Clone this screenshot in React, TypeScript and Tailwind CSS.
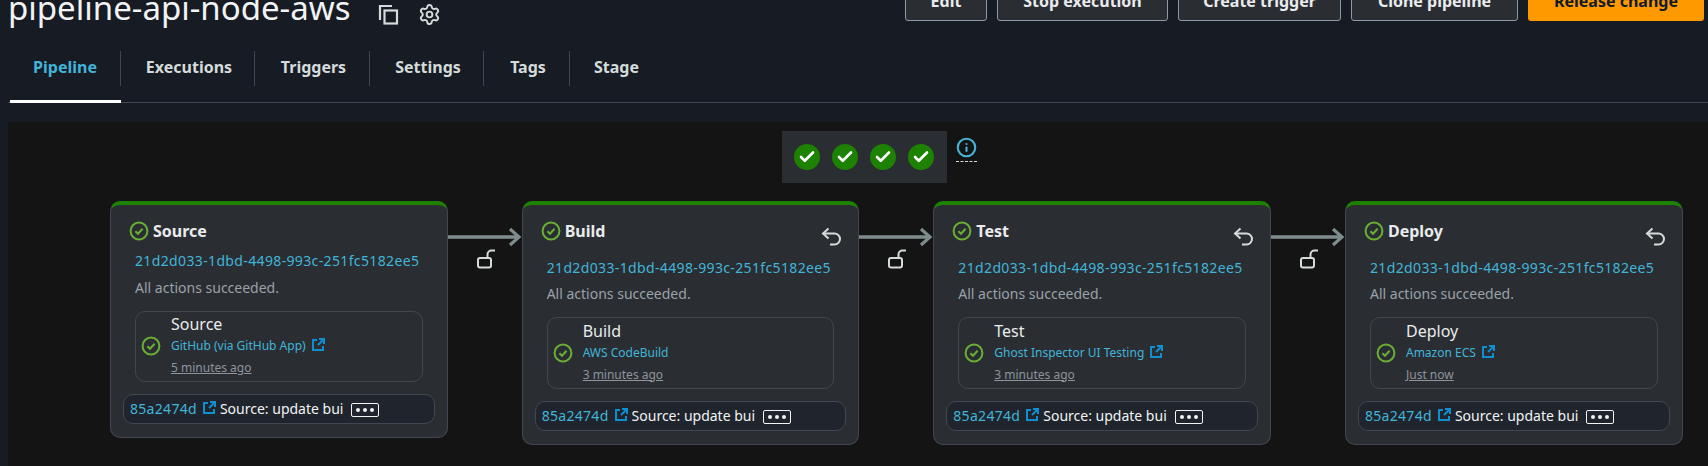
import React from 'react';
import { Check, Settings, Info } from 'lucide-react';

const tabs = ['Pipeline', 'Executions', 'Triggers', 'Settings', 'Tags', 'Stage'];
const tabWidths = ['w-[111px]', 'w-[134px]', 'w-[115px]', 'w-[114px]', 'w-[86px]', 'w-[90px]'];

const buttons = [
    { label: 'Edit', width: 'w-[82px]' },
    { label: 'Stop execution', width: 'w-[171px]' },
    { label: 'Create trigger', width: 'w-[163px]' },
    { label: 'Clone pipeline', width: 'w-[167px]' },
];

const stages = [
    { name: 'Source', provider: 'GitHub (via GitHub App)', time: '5 minutes ago', link: true, rollback: false },
    { name: 'Build', provider: 'AWS CodeBuild', time: '3 minutes ago', link: false, rollback: true },
    { name: 'Test', provider: 'Ghost Inspector UI Testing', time: '3 minutes ago', link: true, rollback: true },
    { name: 'Deploy', provider: 'Amazon ECS', time: 'Just now', link: true, rollback: true },
];

function StatusIcon() {
    return (
        <svg width="20" height="20" viewBox="0 0 20 20" fill="none" className="shrink-0">
            <circle cx="10" cy="10" r="8.4" stroke="#6aaf35" strokeWidth="2" />
            <path d="M6.400 10.200l2.600 2.600 4.600-5" stroke="#6aaf35" strokeWidth="2" />
        </svg>
    );
}

function LinkIcon({ className }: { className: string }) {
    return (
        <svg width="13" height="13" viewBox="0 0 13 13" fill="none" stroke="#0f8fcf" strokeWidth="2" className={`shrink-0 ${className}`}>
            <path d="M5 2H1v10h10V8" />
            <path d="M7 1h5v5M12 1L6 7" />
        </svg>
    );
}

function StageCard({ stage }: { stage: (typeof stages)[number] }) {
    return (
        <div className="w-[337.67px] shrink-0 self-start rounded-[10px] border border-[#414750] border-t-[4px] border-t-[#1d8102] bg-[#2a2e33] px-[12px] pb-[13px]">
            <div className="flex items-start justify-between">
                <div className="mt-[16px] ml-[6px] flex items-center gap-[4px]">
                    <StatusIcon />
                    <span className="text-[16px] leading-[20px] font-bold text-[#e9ebed]">{stage.name}</span>
                </div>
                {stage.rollback && (
                    <svg width="20" height="20" viewBox="0 0 20 20" fill="none" stroke="#d5dbdb" strokeWidth="2" className="mt-[22px] mr-[5px] mb-[1px]">
                        <path d="M7.500 1.500L2 6.500l5.500 5" />
                        <path d="M2 6.500h11.500a5.500 5.500 0 0 1 0 11H9" />
                    </svg>
                )}
            </div>
            <div className="mt-[10px] ml-[12px]">
                <div className="text-[14px] leading-[20px] tracking-[0.36px] text-[#42b4d8]">21d2d033-1dbd-4498-993c-251fc5182ee5</div>
                <div className={`${stage.rollback ? 'mt-[6px]' : 'mt-[7px]'} text-[14px] leading-[20px] text-[#9aa1a8]`}>All actions succeeded.</div>
            </div>
            <div className={`${stage.rollback ? 'h-[71.500px]' : 'h-[70.500px]'} mx-[12px] mt-[13px] flex items-center gap-[10px] rounded-[10px] border border-[#414750] px-[5px]`}>
                <StatusIcon />
                <div className="-mt-[3px]">
                    <div className="text-[16px] leading-[24px] text-[#e9ebed]">{stage.name}</div>
                    <div className="mt-[1px] flex items-center gap-[6px] text-[12px] leading-[18px] text-[#42b4d8]">
                        {stage.provider}
                        {stage.link && <LinkIcon className="mb-[3px]" />}
                    </div>
                    <div className="mt-[4px] text-[12px] leading-[18px] text-[#8d949c] underline">{stage.time}</div>
                </div>
            </div>
            <div className="mt-[12px] flex h-[30px] items-center rounded-[10px] border border-[#414750] bg-[#1f242d] px-[6px] text-[14px]">
                <span className="tracking-[0.3px] text-[#42b4d8]">85a2474d</span>
                <LinkIcon className="ml-[6px] mb-[3px]" />
                <span className="ml-[4px] text-[#f2f3f3]">Source: update bui</span>
                <span className="mt-[3px] ml-[8px] flex h-[14px] w-[28px] items-center justify-center gap-[3px] rounded-[2px] border border-[#f2f3f3]">
                    <i className="size-[4px] rounded-full bg-[#f2f3f3]" />
                    <i className="size-[4px] rounded-full bg-[#f2f3f3]" />
                    <i className="size-[4px] rounded-full bg-[#f2f3f3]" />
                </span>
            </div>
        </div>
    );
}

function Connector() {
    return (
        <div className="flex w-[74px] shrink-0 flex-col items-center pt-[26px]">
            <svg width="74" height="20" viewBox="0 0 74 20" fill="none" stroke="#7f8c8d">
                <path d="M0 10h71" strokeWidth="3.500" />
                <path d="M62 2l9 8-9 8" strokeWidth="3.200" />
            </svg>
            <svg width="20" height="20" viewBox="0 0 20 20" fill="none" stroke="#d5dbdb" strokeWidth="2" className="mt-[2px] ml-[4px]">
                <rect x="1" y="9" width="13" height="9.500" rx="2" />
                <path d="M10.500 9V5.500a4 4 0 0 1 4-4H18" />
            </svg>
        </div>
    );
}

export default function App() {
    return (
        <div className="h-[466px] overflow-hidden bg-[#161b24] font-['Noto_Sans',sans-serif]">
            <div className="-mt-[20px] flex h-[41px] items-start justify-between pr-[4px] pl-[8px]">
                <div className="flex items-start">
                    <h1 className="mt-[8px] text-[33px] leading-[40px] font-normal text-[#f2f3f3]">pipeline-api-node-aws</h1>
                    <svg width="21" height="21" viewBox="0 0 21 21" fill="none" stroke="#d5dbdb" strokeWidth="2.200" className="mt-[24px] ml-[28px]">
                        <path d="M2 16V2h12" />
                        <rect x="6.500" y="6.500" width="12.500" height="13" />
                    </svg>
                    <Settings size={23} strokeWidth={2} className="mt-[23px] ml-[19px] text-[#d5dbdb]" />
                </div>
                <div className="flex gap-[10px] text-[16px] font-bold">
                    {buttons.map((b) => (
                        <button key={b.label} className={`h-[41px] rounded-[3px] border border-[#8d99a8] bg-[#2a2e33] text-[#e9ebed] ${b.width}`}>
                            {b.label}
                        </button>
                    ))}
                    <button className="h-[41px] w-[176px] rounded-[3px] bg-[#ff9900] text-[#0f1b2a]">Release change</button>
                </div>
            </div>
            <div className="mt-[30px] ml-[8px] flex h-[52px] border-b border-[#414750] pl-[2px]">
                {tabs.map((t, i) => (
                    <div key={t} className={`${tabWidths[i]} relative h-[52px]`}>
                        <span
                            className={`flex h-[35px] w-full items-center justify-center pb-[4px] text-[16px] font-bold ${i < 5 ? 'border-r border-[#414750]' : ''} ${i === 0 ? 'text-[#42b4d8]' : 'pl-[3px] text-[#d5dbdb]'}`}
                        >
                            {t}
                        </span>
                        {i === 0 && <span className="absolute right-0 bottom-0 left-0 h-[3px] bg-white" />}
                    </div>
                ))}
            </div>
            <div className="mt-[19px] ml-[8px] h-[344px] bg-[#141414] pt-[9px]">
                <div className="ml-[774px] flex items-start">
                    <div className="flex h-[52px] w-[165px] items-center gap-[12px] bg-[#2a2e33] pl-[12px]">
                        {[0, 1, 2, 3].map((n) => (
                            <span key={n} className="flex size-[26px] items-center justify-center rounded-full bg-[#1d8102]">
                                <Check size={18} strokeWidth={3.500} className="text-white" />
                            </span>
                        ))}
                    </div>
                    <div className="ml-[9px] border-b border-dashed border-[#d5dbdb] pt-[6px] pb-[3px]">
                        <Info size={21} strokeWidth={2.400} className="text-[#42b4d8]" />
                    </div>
                </div>
                <div className="mt-[18px] flex pl-[102px]">
                    {stages.map((s, i) => (
                        <React.Fragment key={s.name}>
                            <StageCard stage={s} />
                            {i < stages.length - 1 && <Connector />}
                        </React.Fragment>
                    ))}
                </div>
            </div>
        </div>
    );
}
